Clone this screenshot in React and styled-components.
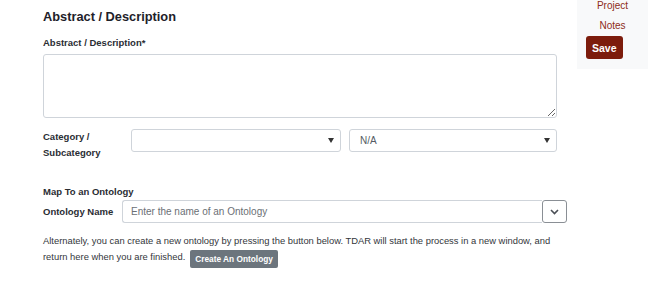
import React from "react";
import styled, { createGlobalStyle } from "styled-components";

const GlobalStyle = createGlobalStyle`
  body {
    margin: 0;
    background: #fff;
    font-family: "Liberation Sans", Arial, sans-serif;
    color: #212529;
  }
`;

function Caret() {
  return (
    <svg width="6" height="5" viewBox="0 0 6 5">
      <path d="M0 0 H6 L3 5 Z" fill="#333" />
    </svg>
  );
}

function Chevron() {
  return (
    <svg width="9" height="6" viewBox="0 0 9 6">
      <path d="M1 1 L4.5 4.5 L8 1" fill="none" stroke="#4a4f55" strokeWidth="1.6" />
    </svg>
  );
}

export default function App() {
  return (
    <Page>
      <GlobalStyle />
      <Main>
        <Heading>Abstract / Description</Heading>
        <FieldLabel>Abstract / Description*</FieldLabel>
        <TextArea />

        <CategoryRow>
          <SideLabel $width={88}>
            Category /
            <br />
            Subcategory
          </SideLabel>
          <SelectBox $width={210}>
            <span></span>
            <Caret />
          </SelectBox>
          <SelectBox $width={208}>
            <span>N/A</span>
            <Caret />
          </SelectBox>
        </CategoryRow>

        <FieldLabel $top={24}>Map To an Ontology</FieldLabel>
        <OntologyRow>
          <SideLabel $width={79} $single>
            Ontology Name
          </SideLabel>
          <OntologyInput placeholder="Enter the name of an Ontology" />
          <DropButton>
            <Chevron />
          </DropButton>
        </OntologyRow>

        <Help>
          Alternately, you can create a new ontology by pressing the button
          below. TDAR will start the process in a new window, and return here
          when you are finished.
          <GreyButton>Create An Ontology</GreyButton>
        </Help>
      </Main>

      <Sidebar>
        <NavLink>Project</NavLink>
        <NavLink>Notes</NavLink>
        <SaveButton>Save</SaveButton>
      </Sidebar>
    </Page>
  );
}

const Page = styled.div`
  display: flex;
  align-items: flex-start;
  width: 648px;
  height: 282px;
  overflow: hidden;
`;

const Main = styled.div`
  display: flex;
  flex-direction: column;
  width: 514px;
  margin-left: 43px;
  padding-top: 9px;
`;

const Heading = styled.h2`
  margin: 0;
  font-size: 12.8px;
  line-height: 16px;
  font-weight: 700;
  color: #1e2129;
`;

const FieldLabel = styled.div`
  margin-top: ${(p) => p.$top ?? 11}px;
  font-size: 9.5px;
  line-height: 14px;
  font-weight: 700;
  color: #2a2d33;
`;

const TextArea = styled.textarea`
  box-sizing: border-box;
  display: block;
  margin-top: 4px;
  width: 514px;
  height: 64px;
  border: 1px solid #cfd4da;
  border-radius: 3px;
  resize: vertical;
  outline: none;
  font: inherit;
`;

const CategoryRow = styled.div`
  display: flex;
  align-items: flex-start;
  margin-top: 11px;
  gap: 8px;
`;

const SideLabel = styled.div`
  flex: 0 0 auto;
  width: ${(p) => p.$width}px;
  margin-right: ${(p) => (p.$single ? 0 : -8)}px;
  font-size: 9.5px;
  line-height: 16px;
  font-weight: 700;
  color: #2a2d33;
`;

const SelectBox = styled.div`
  box-sizing: border-box;
  display: flex;
  align-items: center;
  justify-content: space-between;
  width: ${(p) => p.$width}px;
  height: 23px;
  padding: 0 6px 0 10px;
  border: 1px solid #cfd4da;
  border-radius: 3px;
  background: #fff;
  font-size: 10px;
  color: #555b63;
`;

const OntologyRow = styled.div`
  display: flex;
  align-items: center;
  margin-top: 1px;
  width: 524px;
`;

const OntologyInput = styled.input`
  box-sizing: border-box;
  flex: 1;
  height: 23px;
  padding: 0 8px;
  border: 1px solid #cfd4da;
  border-right: none;
  border-radius: 3px 0 0 3px;
  font-family: inherit;
  font-size: 10px;
  outline: none;

  &::placeholder {
    color: #6b6f75;
  }
`;

const DropButton = styled.div`
  box-sizing: border-box;
  display: flex;
  align-items: center;
  justify-content: center;
  width: 25px;
  height: 23px;
  border: 1px solid #8a8f95;
  border-radius: 3px;
  background: #fff;
`;

const Help = styled.p`
  margin: 10px 0 0;
  font-size: 9.4px;
  line-height: 16px;
  color: #33363b;
`;

const GreyButton = styled.span`
  display: inline-flex;
  align-items: center;
  height: 18px;
  margin-left: 5px;
  padding: 0 5px;
  vertical-align: -2px;
  border-radius: 2px;
  background: #6c757d;
  color: #fff;
  font-size: 8.3px;
  font-weight: 700;
`;

const Sidebar = styled.div`
  display: flex;
  flex-direction: column;
  align-items: flex-start;
  width: 71px;
  margin-left: auto;
  padding-bottom: 10px;
  background: #f8f9fa;
`;

const NavLink = styled.a`
  align-self: stretch;
  margin-bottom: 8px;
  text-align: center;
  font-size: 10px;
  line-height: 12px;
  color: #8e2c20;
  cursor: pointer;
`;

const SaveButton = styled.button`
  margin: -4px 0 0 9px;
  height: 23px;
  padding: 0 6px;
  border: none;
  border-radius: 3px;
  background: #7c1c0c;
  color: #fff;
  font-family: inherit;
  font-size: 10.5px;
  font-weight: 700;
`;
